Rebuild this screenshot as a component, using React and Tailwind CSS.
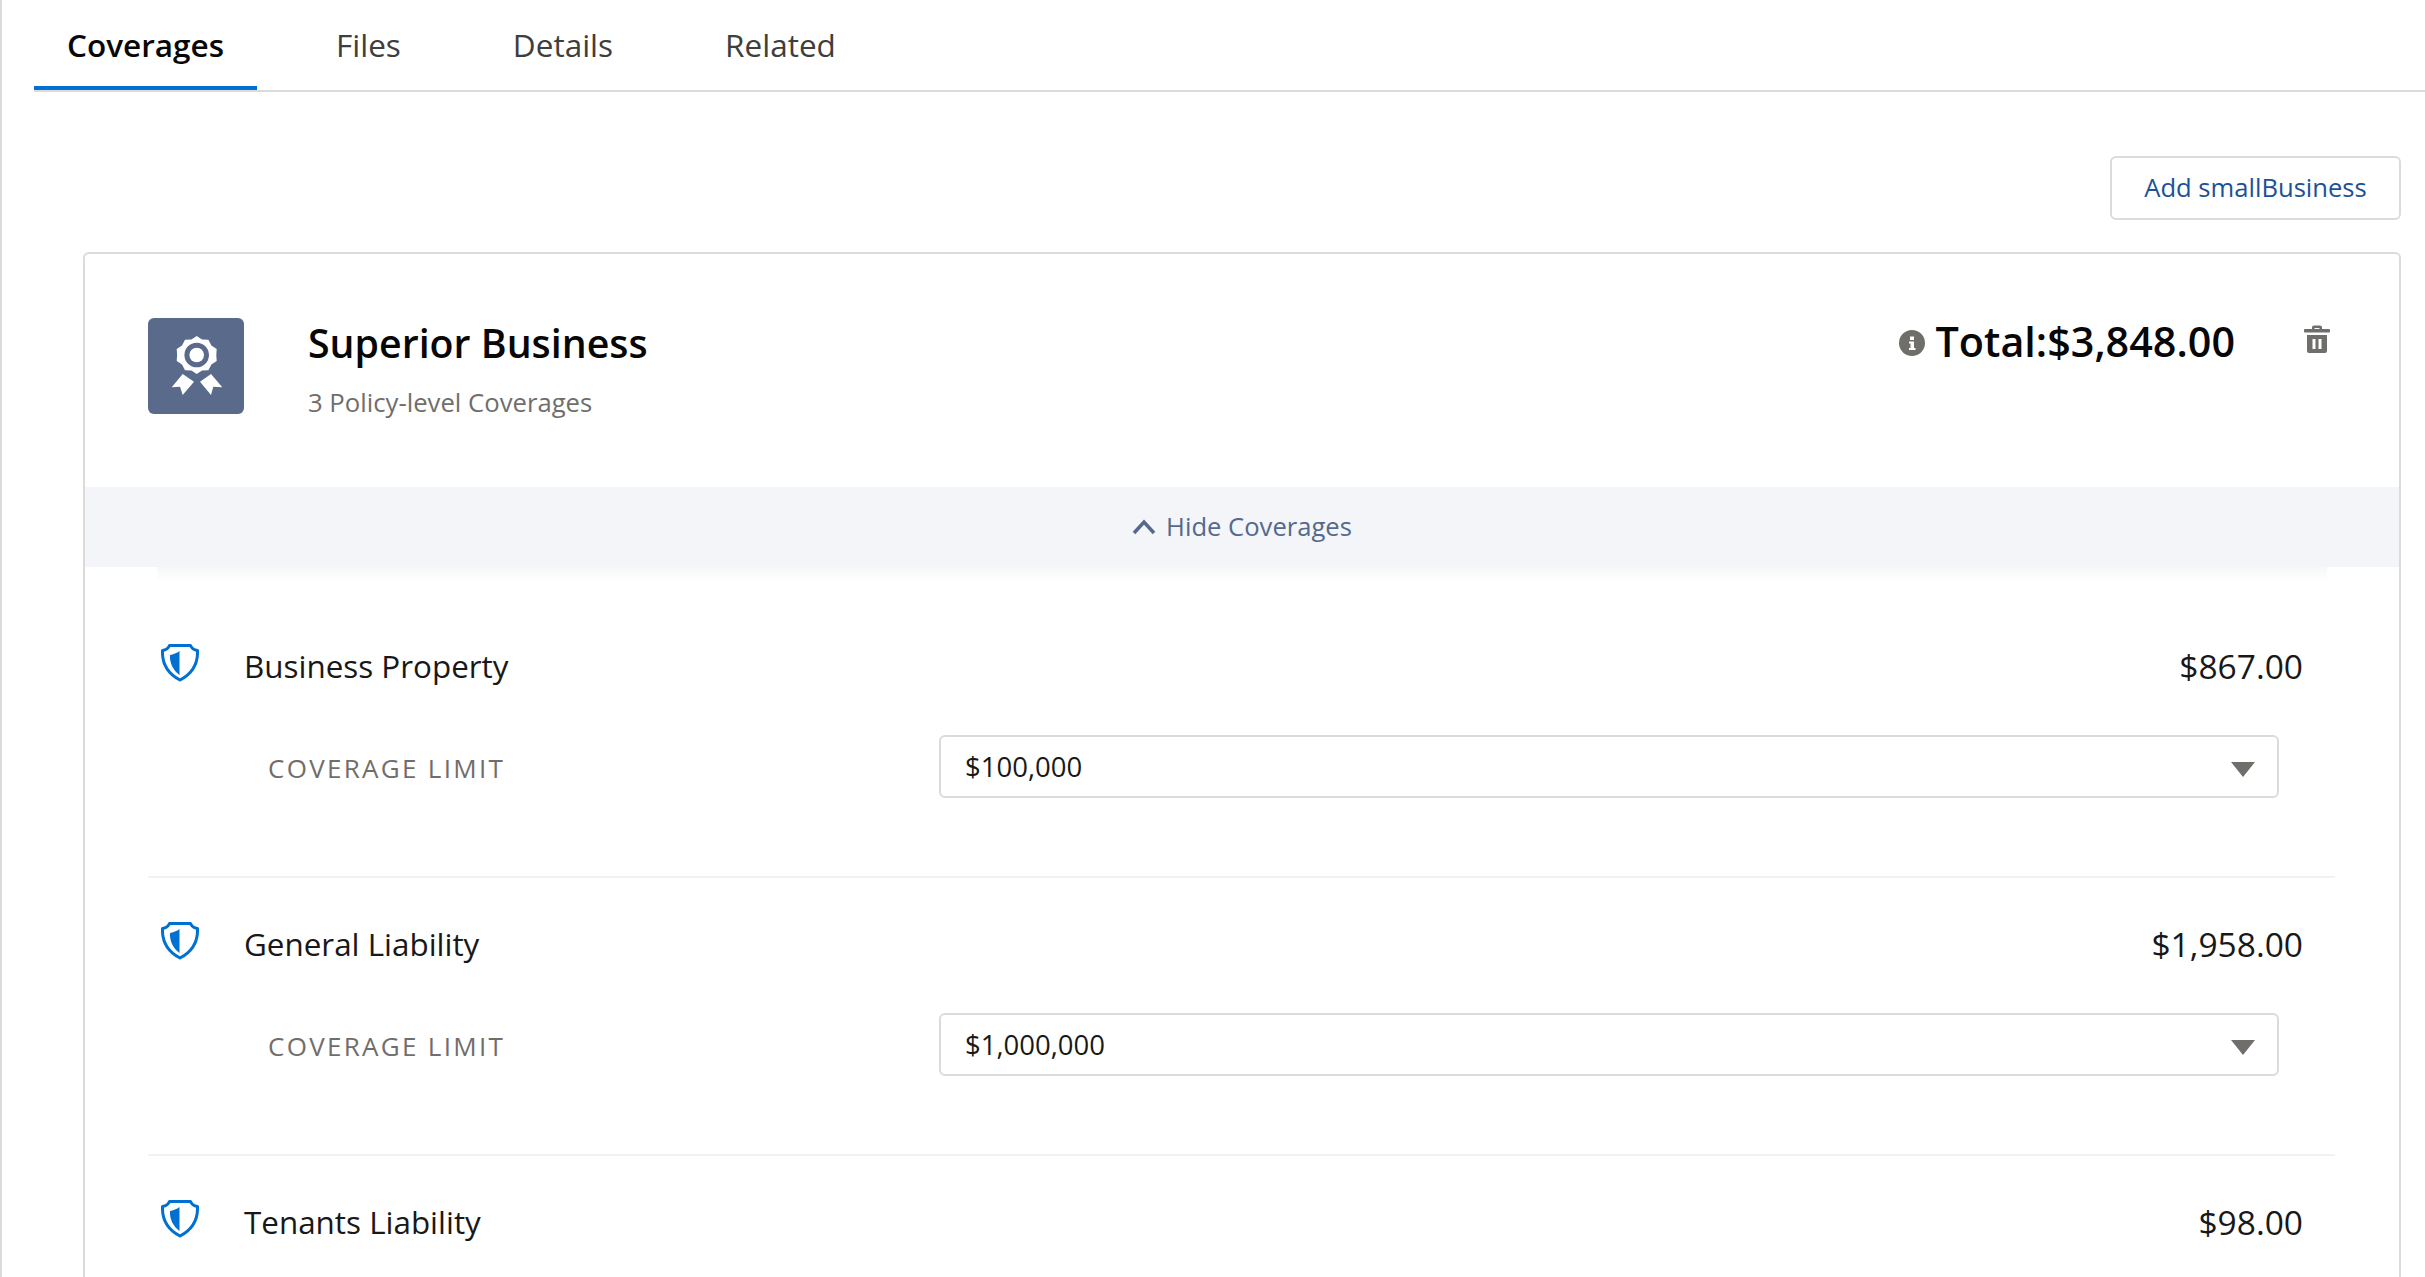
const font = "[font-family:'Open_Sans',sans-serif]"

const tabs = ['Coverages', 'Files', 'Details', 'Related']

const coverages = [
  { name: 'Business Property', price: '$867.00', limit: '$100,000' },
  { name: 'General Liability', price: '$1,958.00', limit: '$1,000,000' },
  { name: 'Tenants Liability', price: '$98.00' },
]

function AwardIcon() {
  return (
    <svg width="96" height="96" viewBox="0 0 96 96" fill="#fff">
      <path
        fillRule="evenodd"
        d="M48.700 18l5.300 3.400 6.400.3 3 5.700 5.300 3.600-.4 6 .4 6-5.300 3.600-3 5.700-6.400.3-5.300 3.400-5.300-3.400-6.400-.3-3-5.700-5.300-3.600.4-6-.4-6 5.300-3.600 3-5.700 6.400-.3zM48.700 24.700a12.300 12.300 0 1 0 0 24.600 12.300 12.300 0 0 0 0-24.600z"
      />
      <circle cx="48.700" cy="37" r="7.300" />
      <path d="M23.700 69.300L34.700 56l11.300 7.700L34.700 77 32 68.700z" />
      <path d="M74.300 69.300L63 56l-11 7.700L63 77l2.300-8.300z" />
    </svg>
  )
}

function ShieldIcon() {
  return (
    <svg width="38" height="40" viewBox="0 0 38 40" className="shrink-0">
      <path
        d="M8.500 2.500h21c1 2.500 3.500 4.500 7 5 .5 12-5 23-17.500 29.500C6.500 30.500 1 19.500 1.500 7.500c3.500-.5 6-2.500 7-5z"
        fill="none"
        stroke="#0070d2"
        strokeWidth="3"
        strokeLinejoin="round"
      />
      <path d="M18.500 8v24C12 27 8.500 20 9 12c3-.5 7-2 9.500-4z" fill="#0070d2" />
    </svg>
  )
}

function InfoIcon() {
  return (
    <svg width="26" height="26" viewBox="0 0 26 26" className="shrink-0">
      <circle cx="13" cy="13" r="13" fill="#706e6b" />
      <path d="M11 6.500h4v3.500h-4zM10 11.500h5v6.500h1.500v2h-6.500v-2h1.500v-4.500h-1.500z" fill="#fff" />
    </svg>
  )
}

function TrashIcon() {
  return (
    <svg width="26" height="28" viewBox="0 0 26 28" fill="#706e6b" className="shrink-0">
      <path d="M8 4.500V2.500A2 2 0 0 1 10 .5h6a2 2 0 0 1 2 2v2h-2.500V3h-5v1.500z" />
      <rect x="0" y="4" width="26" height="3.500" rx="1" />
      <path
        fillRule="evenodd"
        d="M3 10h20v16a2 2 0 0 1-2 2H5a2 2 0 0 1-2-2zM8.500 14v10h3V14zM14.500 14v10h3V14z"
      />
    </svg>
  )
}

function CoverageRow({ item, last }) {
  return (
    <div className={`mr-[64px] ml-[63px] pt-[46px] pb-[78px] ${last ? '' : 'border-b-2 border-[#f3f2f2]'}`}>
      <div className="flex h-[40px] items-center pl-[13px] pr-[32px]">
        <div className="-mt-[7px]">
          <ShieldIcon />
        </div>
        <span className="ml-[45px] text-[31.400px] text-[#181818]">{item.name}</span>
        <span className="ml-auto text-[33.500px] text-[#181818]">{item.price}</span>
      </div>
      {item.limit && (
        <div className="mt-[49px] flex h-[63px] items-center pl-[120px] pr-[56px]">
          <span className="mt-[3px] w-[671px] text-[26px] tracking-[2.300px] text-[#706e6b]">COVERAGE LIMIT</span>
          <div className="flex h-full flex-1 items-center justify-between rounded-[6px] border-2 border-[#dddbda] pl-[24px] pr-[22px]">
            <span className="text-[27.500px] text-[#181818]">{item.limit}</span>
            <svg width="24" height="15" viewBox="0 0 24 15" className="mt-[6px]">
              <path d="M0 0h24L12 15z" fill="#706e6b" />
            </svg>
          </div>
        </div>
      )}
    </div>
  )
}

export default function App() {
  return (
    <div className={`h-[1277px] overflow-hidden border-l-2 border-[#dddbda] bg-white ${font}`}>
      <div className="ml-[32px] flex h-[92px] border-b-2 border-[#dddbda]">
        {tabs.map((tab, i) => (
          <div
            key={tab}
            className={`mr-[46px] flex h-[90px] items-center px-[33px] text-[31.500px] ${
              i === 0
                ? 'border-b-4 border-[#0070d2] pt-[4px] font-semibold text-[#080707]'
                : 'text-[#3e3e3c]'
            }`}
          >
            {tab}
          </div>
        ))}
      </div>

      <div className="mt-[64px] mr-[24px] flex justify-end">
        <button className="h-[64px] w-[291px] rounded-[6px] border-2 border-[#dddbda] text-[25.600px] text-[#1b5297]">
          Add smallBusiness
        </button>
      </div>

      <div className="mt-[32px] mr-[24px] ml-[81px] rounded-t-[6px] border-2 border-[#dddbda]">
        <div className="flex h-[233px] pt-[64px] pl-[63px] pr-[69px]">
          <div className="h-[96px] w-[96px] rounded-[6px] bg-[#596a8b]">
            <AwardIcon />
          </div>
          <div className="ml-[64px]">
            <div className="mt-[3px] text-[39.300px] leading-[44px] font-semibold text-[#080707]">Superior Business</div>
            <div className="mt-[20px] text-[25.700px] leading-[36px] text-[#706e6b]">3 Policy-level Coverages</div>
          </div>
          <div className="ml-auto flex h-[50px] items-center">
            <InfoIcon />
            <span className="-mt-[2px] ml-[11px] text-[41.300px] font-semibold text-[#080707]">Total:$3,848.00</span>
            <div className="-mt-[8px] ml-[69px]">
              <TrashIcon />
            </div>
          </div>
        </div>

        <div className="flex h-[80px] items-center justify-center bg-[#f3f5f9]">
          <svg width="24" height="16" viewBox="0 0 24 16" fill="none" stroke="#54698d" strokeWidth="3.500">
            <path d="M2 14L12 3l10 11" />
          </svg>
          <span className="ml-[10px] text-[25.600px] text-[#54698d]">Hide Coverages</span>
        </div>
        <div className="mx-[72px] h-[14px] bg-gradient-to-b from-[#f7f7f6] to-white" />

        <div className="pt-[19px]">
          {coverages.map((item, i) => (
            <CoverageRow key={item.name} item={item} last={i === coverages.length - 1} />
          ))}
        </div>
      </div>
    </div>
  )
}
